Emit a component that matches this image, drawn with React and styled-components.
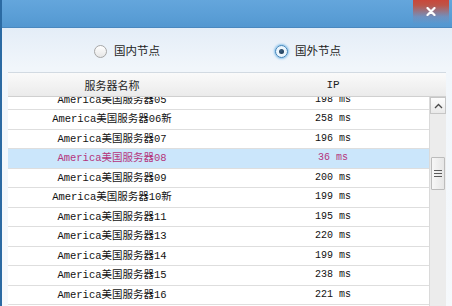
import React from "react";
import styled, { createGlobalStyle } from "styled-components";

const Global = createGlobalStyle`
  html, body { margin: 0; padding: 0; overflow: hidden; background: #eef4fa; }
  #root { width: 452px; height: 306px; overflow: hidden; }
  * { box-sizing: border-box; }
`;

const Window = styled.div`
  width: 452px;
  height: 306px;
  display: flex;
  flex-direction: column;
  border-left: 2px solid #2b6aa3;
  background: #f3f7fb;
  overflow: hidden;
  font-family: "Noto Sans CJK SC", "Noto Sans", sans-serif;
`;

const TitleBar = styled.div`
  height: 28px;
  flex: none;
  display: flex;
  justify-content: flex-end;
  align-items: flex-start;
  background: linear-gradient(to bottom, #64a6dc 0%, #5a9ed6 60%, #5397d0 100%);
  border-bottom: 1px solid #4a88bf;
  padding-right: 3px;
`;

const CloseButton = styled.div`
  width: 36px;
  height: 24px;
  display: flex;
  align-items: center;
  justify-content: center;
  padding-bottom: 2px;
  background: linear-gradient(
    to bottom,
    #c9473a 0%,
    #bd5548 22%,
    rgba(150, 120, 150, 0.35) 70%,
    rgba(90, 158, 214, 0) 100%
  );
`;

const Body = styled.div`
  flex: 1;
  display: flex;
  flex-direction: column;
  padding: 0 6px;
  background: linear-gradient(to bottom, #e4edf7 0px, #f1f6fb 40px, #f6f9fc 100%);
`;

const RadioRow = styled.div`
  height: 44px;
  flex: none;
  display: flex;
  align-items: center;
  padding: 2px 0 0 86px;
  gap: 115px;
`;

const RadioItem = styled.label`
  display: flex;
  align-items: center;
  gap: 7px;
  font-size: 11.5px;
  color: #1e1e1e;
  line-height: 1;
`;

const RadioCircle = styled.span`
  width: 13px;
  height: 13px;
  border-radius: 50%;
  display: flex;
  align-items: center;
  justify-content: center;
  border: 1px solid ${(p) => (p.$checked ? "#3f82b8" : "#a6a6a6")};
  background: ${(p) =>
    p.$checked
      ? "radial-gradient(circle, #ffffff 0%, #dbeefb 100%)"
      : "linear-gradient(to bottom, #ffffff, #e6e6e6)"};
  box-shadow: ${(p) => (p.$checked ? "0 0 2px 1px #8cc4ec" : "none")};
`;

const RadioDot = styled.span`
  width: 5px;
  height: 5px;
  border-radius: 50%;
  background: radial-gradient(circle at 40% 35%, #3b5f80, #16324c);
`;

const Table = styled.div`
  flex: 1;
  display: flex;
  flex-direction: column;
  border-top: 1px solid #d2dae2;
  min-height: 0;
`;

const Header = styled.div`
  height: 24px;
  flex: none;
  display: grid;
  grid-template-columns: 208px 213px 17px;
  align-items: center;
  background: linear-gradient(to bottom, #fafafa, #ebebeb);
  border-bottom: 1px solid #d0d0d0;
  font-size: 11px;
  color: #1e1e1e;
`;

const HeadCell = styled.div`
  text-align: center;
  padding-left: ${(p) => p.$pad || 0}px;
  font-family: ${(p) => (p.$mono ? '"Liberation Mono", monospace' : "inherit")};
`;

const Content = styled.div`
  flex: 1;
  display: flex;
  min-height: 0;
`;

const List = styled.div`
  width: 421px;
  overflow: hidden;
  background: #ffffff;
`;

const Rows = styled.div`
  margin-top: -6.5px;
`;

const Row = styled.div`
  height: 19.5px;
  display: grid;
  grid-template-columns: 208px 213px;
  align-items: center;
  border-bottom: 1px solid #dedede;
  background: ${(p) => (p.$active ? "#cbe6fb" : "#ffffff")};
  color: ${(p) => (p.$active ? "#b4347c" : "#111111")};
`;

const Cell = styled.div`
  text-align: center;
  white-space: nowrap;
  padding-left: ${(p) => p.$pad || 0}px;
  font-family: "Liberation Mono", "Noto Sans CJK SC", monospace;
  font-size: ${(p) => p.$size || 10.5}px;
  line-height: 1;
`;

const Scrollbar = styled.div`
  width: 17px;
  display: flex;
  flex-direction: column;
  background: #ececec;
  border-left: 1px solid #dadada;
`;

const ScrollButton = styled.div`
  height: 17px;
  flex: none;
  display: flex;
  align-items: center;
  justify-content: center;
  border: 1px solid #c6c6c6;
  background: linear-gradient(to bottom, #fdfdfd, #e9e9e9);
`;

const Track = styled.div`
  flex: 1;
  display: flex;
  flex-direction: column;
  padding-top: 43px;
`;

const Thumb = styled.div`
  height: 33px;
  margin: 0 1px;
  border: 1px solid #bcbcbc;
  border-radius: 1px;
  background: linear-gradient(to right, #f7f7f7, #e6e6e6);
  display: flex;
  flex-direction: column;
  align-items: center;
  justify-content: center;
  gap: 2px;
`;

const Grip = styled.span`
  width: 8px;
  height: 1px;
  background: #5a5a5a;
`;

const rows = [
  ["America美国服务器05", "198 ms"],
  ["America美国服务器06新", "258 ms"],
  ["America美国服务器07", "196 ms"],
  ["America美国服务器08", "36 ms", true],
  ["America美国服务器09", "200 ms"],
  ["America美国服务器10新", "199 ms"],
  ["America美国服务器11", "195 ms"],
  ["America美国服务器13", "220 ms"],
  ["America美国服务器14", "199 ms"],
  ["America美国服务器15", "238 ms"],
  ["America美国服务器16", "221 ms"],
  ["America美国服务器17", "205 ms"],
];

const Chevron = ({ up }) => (
  <svg width="9" height="6" viewBox="0 0 9 6">
    <path
      d={up ? "M1 5 L4.5 1.5 L8 5" : "M1 1 L4.5 4.5 L8 1"}
      fill="none"
      stroke="#4a4a4a"
      strokeWidth="1.3"
    />
  </svg>
);

export default function App() {
  return (
    <>
      <Global />
      <Window>
        <TitleBar>
          <CloseButton>
            <svg width="10" height="9" viewBox="0 0 10 9">
              <path d="M1.5 1 L8.5 8 M8.5 1 L1.5 8" stroke="#ffffff" strokeWidth="2.2" strokeLinecap="round" />
            </svg>
          </CloseButton>
        </TitleBar>
        <Body>
          <RadioRow>
            <RadioItem>
              <RadioCircle />
              国内节点
            </RadioItem>
            <RadioItem>
              <RadioCircle $checked>
                <RadioDot />
              </RadioCircle>
              国外节点
            </RadioItem>
          </RadioRow>
          <Table>
            <Header>
              <HeadCell>服务器名称</HeadCell>
              <HeadCell $pad={21} $mono>IP</HeadCell>
              <span />
            </Header>
            <Content>
              <List>
                <Rows>
                  {rows.map(([name, ms, active]) => (
                    <Row key={name} $active={active}>
                      <Cell>{name}</Cell>
                      <Cell $pad={21} $size={10}>{ms}</Cell>
                    </Row>
                  ))}
                </Rows>
              </List>
              <Scrollbar>
                <ScrollButton>
                  <Chevron up />
                </ScrollButton>
                <Track>
                  <Thumb>
                    <Grip />
                    <Grip />
                    <Grip />
                  </Thumb>
                </Track>
                <ScrollButton>
                  <Chevron />
                </ScrollButton>
              </Scrollbar>
            </Content>
          </Table>
        </Body>
      </Window>
    </>
  );
}
